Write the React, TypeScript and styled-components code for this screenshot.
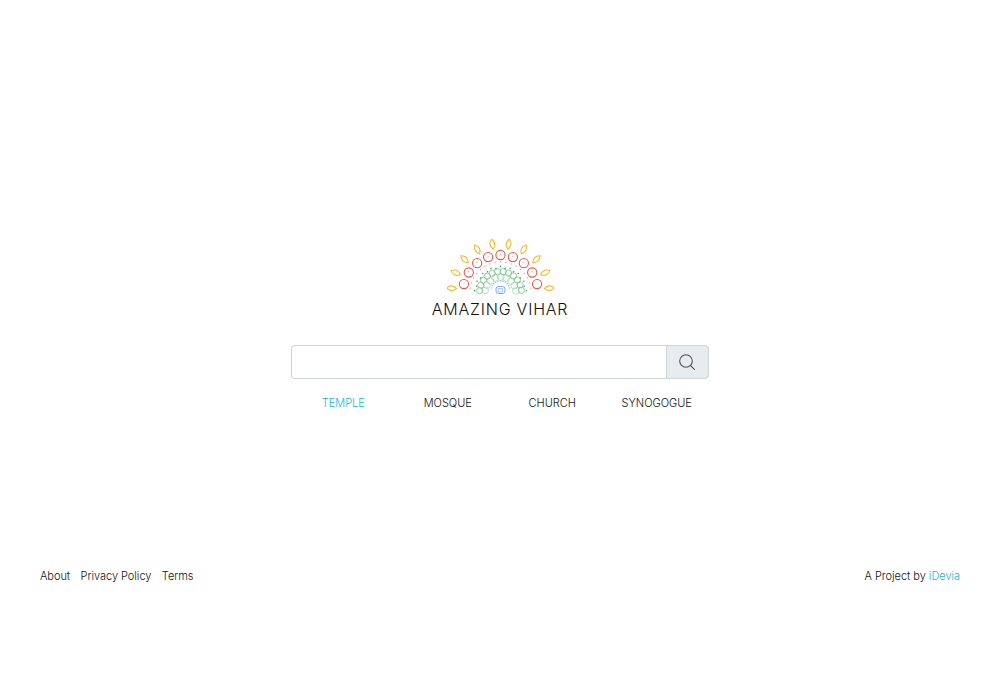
import React from "react";
import styled, { createGlobalStyle } from "styled-components";

const GlobalStyle = createGlobalStyle`
  html, body {
    margin: 0;
    padding: 0;
    background: #ffffff;
  }
  * {
    box-sizing: border-box;
  }
`;

const polar = (r: number, deg: number) => {
  const a = (deg * Math.PI) / 180;
  return { x: 53.5 + r * Math.cos(a), y: 53.5 - r * Math.sin(a) };
};

const range = (n: number, from: number, to: number) =>
  Array.from({ length: n }, (_, i) => from + ((to - from) * i) / (n - 1));

// Drawn around the bottom-centre point of the mandala
const Logo: React.FC = () => (
  <svg width="107" height="56" viewBox="0 0 107 56" fill="none">
    {range(10, 175, 5).map((deg) => {
      const p = polar(49, deg);
      return (
        <path
          key={deg}
          d="M-5 0Q0 -4.8 5 0Q0 4.8 -5 0z"
          stroke="#f3b92f"
          strokeWidth="1.1"
          transform={`translate(${p.x} ${p.y}) rotate(${-deg})`}
        />
      );
    })}
    {range(9, 167, 13).map((deg) => {
      const p = polar(37.5, deg);
      return (
        <g key={deg}>
          <circle cx={p.x} cy={p.y} r="4.6" stroke="#e8584a" strokeWidth="1.1" />
          <circle cx={p.x} cy={p.y - 0.8} r="0.6" fill="#f0958b" />
        </g>
      );
    })}
    {range(17, 172, 8).map((deg) => {
      const p = polar(30.5, deg);
      return <circle key={deg} cx={p.x} cy={p.y} r="0.7" fill="#f09a90" />;
    })}
    {range(9, 172, 6).map((deg) => {
      const p = polar(15.5, deg);
      return <circle key={deg} cx={p.x} cy={p.y} r="3.4" stroke="#a6dab2" strokeWidth="0.8" />;
    })}
    {range(12, 175, 6).map((deg) => {
      const p = polar(21, deg);
      return <circle key={deg} cx={p.x} cy={p.y} r="3.1" stroke="#74c488" strokeWidth="0.8" />;
    })}
    {range(17, 176, 4).map((deg, i) => {
      const p = polar(i % 2 ? 24.5 : 26, deg);
      return <circle key={deg} cx={p.x} cy={p.y} r="0.8" fill="#2fa44f" />;
    })}
    {range(11, 165, 15).map((deg) => {
      const p = polar(9.5, deg);
      return <circle key={deg} cx={p.x} cy={p.y - 2} r="0.7" fill="#8ab5f5" />;
    })}
    <rect x="49" y="47.5" width="9" height="7" rx="2.5" stroke="#74a6f1" strokeWidth="1" />
    <rect x="51.5" y="49.5" width="4" height="3.5" stroke="#9dbff6" strokeWidth="0.8" />
  </svg>
);

const SearchIcon: React.FC = () => (
  <svg width="16" height="16" viewBox="0 0 16 16" fill="none" stroke="#495057" strokeWidth="1.05">
    <circle cx="7" cy="7" r="6.3" />
    <path d="M11.6 11.6 15.4 15.4" strokeLinecap="round" />
  </svg>
);

const App: React.FC = () => {
  return (
    <Page>
      <GlobalStyle />
      <Main>
        <Brand>
          <Logo />
          <Title>AMAZING VIHAR</Title>
        </Brand>
        <SearchBar>
          <SearchInput type="text" aria-label="Search" />
          <SearchButton type="button" aria-label="Search">
            <SearchIcon />
          </SearchButton>
        </SearchBar>
        <Categories>
          <Category href="#" $active>TEMPLE</Category>
          <Category href="#">MOSQUE</Category>
          <Category href="#">CHURCH</Category>
          <Category href="#">SYNOGOGUE</Category>
        </Categories>
      </Main>
      <Footer>
        <FooterLinks>
          <FooterLink href="#">About</FooterLink>
          <FooterLink href="#">Privacy Policy</FooterLink>
          <FooterLink href="#">Terms</FooterLink>
        </FooterLinks>
        <Credit>
          A Project by <CreditLink href="#">iDevia</CreditLink>
        </Credit>
      </Footer>
    </Page>
  );
};

// Styled Components
const Page = styled.div`
  min-height: 700px;
  padding-top: 239px;
  display: flex;
  flex-direction: column;
  font-family: "Inter", "Liberation Sans", sans-serif;
  font-weight: 300;
  color: #111111;
  background: #ffffff;
`;

const Main = styled.main`
  width: 418px;
  margin: 0 auto;
  display: flex;
  flex-direction: column;
`;

const Brand = styled.div`
  display: flex;
  flex-direction: column;
  align-items: center;
`;

const Title = styled.h1`
  margin: 4px 0 0;
  font-size: 16px;
  line-height: 20px;
  font-weight: 300;
  letter-spacing: 0.78px;
  white-space: nowrap;
`;

const SearchBar = styled.div`
  display: flex;
  height: 34px;
  margin-top: 26px;
`;

const SearchInput = styled.input`
  flex: 1;
  min-width: 0;
  border: 1px solid #ced4da;
  border-right: 0;
  border-radius: 4px 0 0 4px;
  background: #ffffff;
  outline: none;
`;

const SearchButton = styled.button`
  width: 43px;
  display: flex;
  align-items: center;
  justify-content: center;
  padding: 0 1px 0 0;
  border: 1px solid #ced4da;
  border-radius: 0 4px 4px 0;
  background: #e9ecef;
`;

const Categories = styled.nav`
  display: grid;
  grid-template-columns: repeat(4, 1fr);
  margin-top: 17px;
`;

const Category = styled.a<{ $active?: boolean }>`
  text-align: center;
  font-size: 11px;
  line-height: 15px;
  text-decoration: none;
  color: ${({ $active }) => ($active ? "#17b8d0" : "#111111")};
`;

const Footer = styled.footer`
  display: flex;
  justify-content: space-between;
  align-items: center;
  margin-top: 158px;
  padding: 0 40px;
  font-size: 11px;
  line-height: 15px;
`;

const FooterLinks = styled.nav`
  display: flex;
  gap: 10.5px;
  letter-spacing: -0.04px;
`;

const FooterLink = styled.a`
  color: #111111;
  text-decoration: none;
`;

const Credit = styled.div`
  color: #111111;
  letter-spacing: -0.04px;
`;

const CreditLink = styled.a`
  color: #17b8d0;
  text-decoration: none;
`;

export default App;
